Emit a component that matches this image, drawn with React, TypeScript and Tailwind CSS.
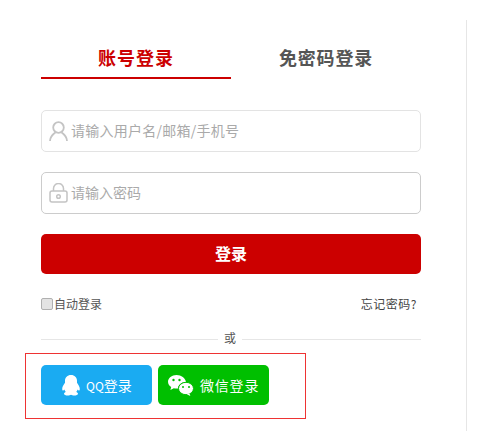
import React from 'react';

const cjk = '"Noto Sans CJK SC", "Liberation Sans", sans-serif';

function UserIcon() {
    return (
        <svg width="19" height="21" viewBox="0 0 19 21" fill="none" stroke="#c4c4c4" strokeWidth="1.800">
            <circle cx="9.500" cy="6.500" r="5.300" />
            <path d="M1 20c0-4.500 2.800-6.800 5.600-8.800M18 20c0-4.500-2.800-6.800-5.600-8.800" />
        </svg>
    );
}

function LockIcon() {
    return (
        <svg width="19" height="20" viewBox="0 0 19 20" fill="none" stroke="#c4c4c4" strokeWidth="1.500">
            <path d="M4.500 8V5.500a5 5 0 0 1 10 0V8" />
            <rect x="1" y="8" width="17" height="11" rx="2" />
            <circle cx="9.500" cy="13.500" r="1.800" />
        </svg>
    );
}

function QQIcon() {
    return (
        <svg width="18" height="21" viewBox="0 0 18 23" preserveAspectRatio="none" fill="#fff">
            <path d="M9 0c3.600 0 6 2.700 6 6.200v2.300c1.300 1.900 2.800 4.600 2.800 6.700 0 1.300-.4 1.900-.9 1.900-.4 0-.9-.5-1.300-1.200-.2 1-.7 1.900-1.400 2.600 1 .4 1.800 1 1.800 1.900 0 1.300-1.800 2-3.800 2-1.300 0-2.500-.3-3.200-.9-.7.600-1.900.9-3.200.9-2 0-3.800-.7-3.800-2 0-.9.800-1.500 1.800-1.900-.7-.7-1.200-1.600-1.400-2.600-.4.700-.9 1.200-1.300 1.200-.5 0-.9-.6-.9-1.900 0-2.100 1.500-4.800 2.800-6.700V6.200C3 2.700 5.400 0 9 0z" />
        </svg>
    );
}

function WechatIcon() {
    return (
        <svg width="26" height="21" viewBox="0 0 26 21">
            <path d="M8.500 0C3.800 0 0 3 0 6.800c0 2.200 1.200 4 3.200 5.300L2.400 15l3.400-1.800c.9.300 1.800.4 2.700.4h1.500C10 10 13.500 7 18 7c-.7-4-4.600-7-9.500-7z" fill="#fff" />
            <ellipse cx="18" cy="13.500" rx="7.500" ry="6.200" fill="#fff" stroke="#00bf00" strokeWidth="1" />
            <path d="M21.500 18.500l.8 2.500-3.500-1.700z" fill="#fff" />
            <circle cx="5.500" cy="5" r="1.200" fill="#00bf00" />
            <circle cx="11.500" cy="5" r="1.200" fill="#00bf00" />
            <circle cx="15" cy="12" r="1" fill="#00bf00" />
            <circle cx="21" cy="12" r="1" fill="#00bf00" />
        </svg>
    );
}

export default function App() {
    return (
        <div className="flex w-[478px] h-[431px] overflow-hidden bg-white" style={{ fontFamily: cjk }}>
            <div className="w-[380px] ml-[41px] shrink-0">
                <div className="flex mt-[39px] h-[40px]">
                    <div className="w-[190px] h-[40px] border-b-2 border-[#cc0000] text-center text-[18px] leading-[36px] font-bold text-[#cc0000] tracking-[1px]">账号登录</div>
                    <div className="w-[190px] h-[40px] text-center text-[18px] leading-[36px] font-bold text-[#555555] tracking-[0.8px]">免密码登录</div>
                </div>

                <div className="flex items-center h-[42px] mt-[31px] border border-[#e3e3e3] rounded-[5px] pl-[7px]">
                    <UserIcon />
                    <span className="ml-[3px] -mt-[2px] text-sm tracking-[0.25px] text-[#aaaaaa]">请输入用户名/邮箱/手机号</span>
                </div>
                <div className="flex items-center h-[42px] mt-[20px] border border-[#cccccc] rounded-[5px] pl-[7px]">
                    <LockIcon />
                    <span className="ml-[3px] -mt-[2px] text-sm text-[#aaaaaa]">请输入密码</span>
                </div>

                <div className="h-[40px] mt-[20px] rounded-[5px] bg-[#cc0000] text-white text-center font-bold text-base leading-[39px]">登录</div>

                <div className="flex justify-between items-center h-[20px] mt-[20px] text-xs text-[#555555]">
                    <label className="flex items-center">
                        <span className="w-[12px] h-[12px] border border-[#b0b0b0] rounded-[2px] bg-[#e3e3e3]" />
                        <span className="ml-px">自动登录</span>
                    </label>
                    <span className="mr-[4px] tracking-[0.5px] text-[#444444]">忘记密码?</span>
                </div>

                <div className="flex items-center h-[20px] mt-[15px] text-xs text-[#555555]">
                    <div className="h-px flex-1 bg-[#e6e6e6]" />
                    <span className="px-[6px] -mt-[2px]">或</span>
                    <div className="h-px w-[179px] bg-[#e6e6e6]" />
                </div>

                <div className="flex gap-[6px] w-[281px] h-[66px] -ml-[16px] mt-[4px] border border-[#ee3333] pl-[15px] pt-[11px]">
                    <div className="flex items-center w-[111px] h-[40px] rounded-[5px] bg-[#1aabf2] text-white text-sm pl-[21px]">
                        <QQIcon />
                        <span className="ml-[6px]"><span className="text-xs">QQ</span>登录</span>
                    </div>
                    <div className="flex items-center w-[111px] h-[40px] rounded-[5px] bg-[#00bf00] text-white text-sm pl-[10px]">
                        <WechatIcon />
                        <span className="ml-[6px] tracking-[0.8px]">微信登录</span>
                    </div>
                </div>
            </div>
            <div className="w-px h-[411px] mt-[20px] ml-[45px] bg-[#e6e6e6]" />
        </div>
    );
}
